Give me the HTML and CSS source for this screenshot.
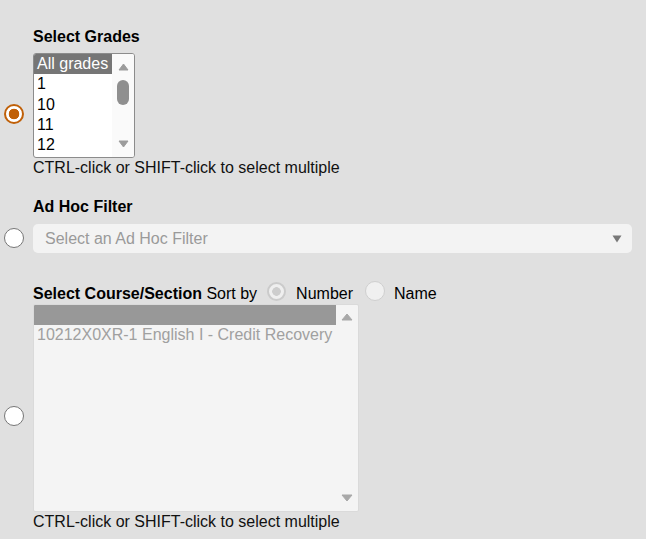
FILE: index.html
```html
<!DOCTYPE html>
<html>
<head>
<meta charset="utf-8">
<link rel="stylesheet" href="styles.css">
</head>
<body>
<div class="form">
  <div class="row row-grades">
    <div class="radio-cell"><span class="radio radio-checked radio-grades"></span></div>
    <div class="field">
      <div class="label">Select Grades</div>
      <div class="listbox listbox-grades">
        <div class="options">
          <div class="opt opt-selected">All grades</div>
          <div class="opt">1</div>
          <div class="opt">10</div>
          <div class="opt">11</div>
          <div class="opt">12</div>
        </div>
        <div class="scrollbar scrollbar-grades">
          <svg class="arrow" width="11" height="8" viewBox="0 0 11 8"><path d="M5.5 1 L10 7 H1 Z" fill="#9c9c9c" stroke="#9c9c9c" stroke-width="1" stroke-linejoin="round"/></svg>
          <span class="thumb"></span>
          <svg class="arrow arrow-down" width="11" height="8" viewBox="0 0 11 8"><path d="M1 1 H10 L5.5 7 Z" fill="#9c9c9c" stroke="#9c9c9c" stroke-width="1" stroke-linejoin="round"/></svg>
        </div>
      </div>
      <div class="hint">CTRL-click or SHIFT-click to select multiple</div>
    </div>
  </div>

  <div class="row row-adhoc">
    <div class="radio-cell"><span class="radio radio-adhoc"></span></div>
    <div class="field">
      <div class="label">Ad Hoc Filter</div>
      <div class="select">
        <span class="placeholder">Select an Ad Hoc Filter</span>
        <svg width="10" height="8" viewBox="0 0 10 8"><path d="M0.5 0.5 H9.5 L5 7.5 Z" fill="#787878"/></svg>
      </div>
    </div>
  </div>

  <div class="row row-course">
    <div class="radio-cell"><span class="radio radio-course"></span></div>
    <div class="field">
      <div class="label-line"><b class="label-strong">Select Course/Section</b> Sort by<span class="sort-radio sort-radio-checked"></span>Number<span class="sort-radio sort-radio-empty"></span>Name</div>
      <div class="listbox listbox-course">
        <div class="options">
          <div class="opt opt-disabled-selected"></div>
          <div class="opt opt-disabled">10212X0XR-1 English I - Credit Recovery</div>
        </div>
        <div class="scrollbar scrollbar-course">
          <svg class="arrow" width="12" height="8" viewBox="0 0 12 8"><path d="M6 1 L11 7 H1 Z" fill="#a8a8a8" stroke="#a8a8a8" stroke-width="1" stroke-linejoin="round"/></svg>
          <svg class="arrow arrow-down" width="12" height="8" viewBox="0 0 12 8"><path d="M1 1 H11 L6 7 Z" fill="#a8a8a8" stroke="#a8a8a8" stroke-width="1" stroke-linejoin="round"/></svg>
        </div>
      </div>
      <div class="hint">CTRL-click or SHIFT-click to select multiple</div>
    </div>
  </div>
</div>
</body>
</html>
```

FILE: styles.css
```css
html, body {
  margin: 0;
  padding: 0;
  background: #e0e0e0;
}

body {
  font-family: "Liberation Sans", Arial, sans-serif;
  font-size: 16px;
  line-height: 20px;
  color: #000;
}

.form {
  padding: 27px 14px 0 0;
}

.row {
  display: flex;
  align-items: flex-start;
}

.row-adhoc {
  margin-top: 19px;
}

.row-course {
  margin-top: 31px;
}

.radio-cell {
  width: 33px;
  flex: none;
}

.radio {
  display: block;
  width: 20px;
  height: 20px;
  box-sizing: border-box;
  margin-left: 4px;
  border-radius: 50%;
  border: 1.5px solid #767676;
  background: #fff;
}

.radio-checked {
  border: 2px solid #c06008;
  background: radial-gradient(circle, #c06008 0 5px, #fff 5.6px);
}

.radio-grades {
  margin-top: 77px;
}

.radio-adhoc {
  margin-top: 31px;
}

.radio-course {
  margin-top: 122px;
}

.field {
  flex: 1;
  min-width: 0;
}

.label {
  font-weight: bold;
  color: #000;
}

.label-strong {
  font-weight: bold;
}

.label-line {
  color: #000;
  white-space: nowrap;
}

.sort-radio {
  display: inline-block;
  box-sizing: border-box;
  border-radius: 50%;
  vertical-align: -2px;
  margin-top: -5px;
}

.sort-radio-checked {
  width: 19px;
  height: 19px;
  margin-left: 10px;
  margin-right: 10px;
  border: 2px solid #cbcbcb;
  background: radial-gradient(circle, #cdcdcd 0 4px, #efefef 4.6px);
}

.sort-radio-empty {
  width: 20px;
  height: 20px;
  margin-left: 12px;
  margin-right: 9px;
  border: 1.5px solid #cfcfcf;
  background: #f0f0f0;
}

.listbox {
  display: flex;
  box-sizing: border-box;
  overflow: hidden;
}

.listbox-grades {
  margin-top: 6px;
  width: 102px;
  height: 105px;
  border: 1px solid #8c8c8c;
  border-radius: 3px;
  background: #fff;
}

.listbox-course {
  width: 326px;
  height: 208px;
  border: 1px solid #dadada;
  border-radius: 2px;
  background: #f4f4f4;
}

.options {
  flex: 1;
  min-width: 0;
}

.opt {
  height: 20px;
  line-height: 20px;
  padding-left: 3px;
  white-space: nowrap;
  color: #000;
}

.listbox-grades .opt + .opt {
  margin-top: 0.3px;
}

.opt-selected {
  background: #767676;
  color: #fff;
}

.opt-disabled-selected {
  background: #989898;
}

.opt-disabled {
  color: #a0a0a0;
}

.scrollbar {
  width: 22px;
  flex: none;
  display: flex;
  flex-direction: column;
  align-items: center;
  box-sizing: border-box;
}

.scrollbar-grades {
  background: #fafafa;
  padding: 9px 0 9px 0;
}

.scrollbar-course {
  padding: 8px 0 9px 0;
}

.arrow {
  display: block;
  flex: none;
}

.arrow-down {
  margin-top: auto;
}

.thumb {
  display: block;
  width: 12px;
  height: 25px;
  margin-top: 9px;
  margin-right: 1px;
  border-radius: 6px;
  background: #8f8f8f;
}

.hint {
  color: #111;
}

.select {
  margin-top: 7px;
  height: 29px;
  box-sizing: border-box;
  background: #f3f3f3;
  border-radius: 5px;
  display: flex;
  align-items: center;
  justify-content: space-between;
  padding: 0 10px 0 12px;
}

.placeholder {
  color: #9a9a9a;
}
```
